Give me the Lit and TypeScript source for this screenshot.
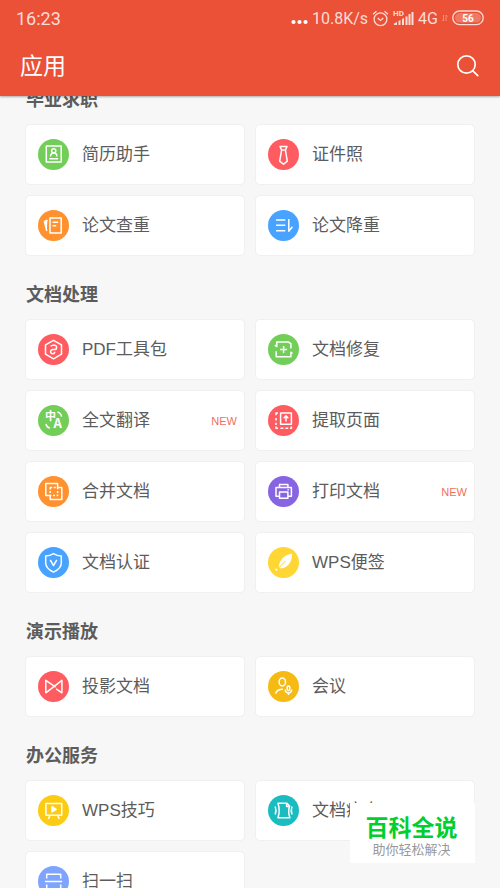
import { LitElement, html, svg, css, nothing, type SVGTemplateResult } from "lit";
import { customElement, property } from "lit/decorators.js";

interface AppItem {
  name: string;
  icon: string;
  color: string;
  isNew?: boolean;
}

interface AppSection {
  title: string;
  items: AppItem[];
}

const GREEN = "#73cd59";
const RED = "#ff5c62";
const ORANGE = "#ff912e";
const BLUE = "#47a3ff";

const sections: AppSection[] = [
  {
    title: "毕业求职",
    items: [
      { name: "简历助手", icon: "resume", color: GREEN },
      { name: "证件照", icon: "tie", color: RED },
      { name: "论文查重", icon: "check", color: ORANGE },
      { name: "论文降重", icon: "reduce", color: BLUE },
    ],
  },
  {
    title: "文档处理",
    items: [
      { name: "PDF工具包", icon: "pdf", color: RED },
      { name: "文档修复", icon: "repair", color: GREEN },
      { name: "全文翻译", icon: "translate", color: GREEN, isNew: true },
      { name: "提取页面", icon: "extract", color: RED },
      { name: "合并文档", icon: "merge", color: ORANGE },
      { name: "打印文档", icon: "print", color: "#8764e2", isNew: true },
      { name: "文档认证", icon: "shield", color: BLUE },
      { name: "WPS便签", icon: "feather", color: "#ffd633" },
    ],
  },
  {
    title: "演示播放",
    items: [
      { name: "投影文档", icon: "project", color: RED },
      { name: "会议", icon: "meeting", color: "#f6ba14" },
    ],
  },
  {
    title: "办公服务",
    items: [
      { name: "WPS技巧", icon: "tips", color: "#fccb14" },
      { name: "文档瘦身", icon: "slim", color: "#1bbcc0" },
      { name: "扫一扫", icon: "scan", color: "#7ea4ff" },
    ],
  },
];

const glyphs: Record<string, SVGTemplateResult> = {
  resume: svg`<path d="M8.3 7h14.9v16H8.3z"/><circle cx="15.7" cy="11.8" r="2.1"/><path d="M12.5 17.6c0-2.3 1.2-3.6 3.2-3.6s3.2 1.3 3.2 3.6M11.3 19.8h8.8"/>`,
  tie: svg`<path d="M12 7.5h7l-1.6 3.6h-3.8zM13.6 11.1l-1.9 11 3.8 3.2 3.8-3.2-1.9-11"/>`,
  check: svg`<path d="M12 8h11.2v15H12zM14.6 12.2h5.6M14.6 15.8h3.6"/><path d="M9.4 10.2l-3 1.2 2.4 9.6z" fill="#fff" stroke="none"/><path d="M9.4 10.2l-3 1.2 2.4 9.6"/>`,
  reduce: svg`<path d="M8 10h9.3M8 15.3h9.3M8 20.7h9.3M20.8 9v12.2l3.6-4.4"/>`,
  pdf: svg`<path d="M15.5 6.3l8 4.6v9.3l-8 4.6-8-4.6v-9.3z"/><path d="M12.6 12.4c.6-.9 1.500-1.200 2.600-1.200h1.200a2.200 2.200 0 0 1 0 4.400h-1.700a2.100 2.100 0 1 0 0 4.200c1.700 0 2-.9 2-2"/>`,
  repair: svg`<path d="M6.8 11.2l2 1.300V8h11.500l2.600 1.600v5M8.200 17.200v5.600h14.700v-4.600l1.600 1.300M15.600 12v7M12.100 15.500h7"/>`,
  translate: svg`<text class="zh" x="7" y="15">中</text><text class="en" x="15.400" y="23.400">A</text><path d="M19.400 7c2.200.5 3.600 2 4.200 4.600M8 18.800c.3 2.300 1.500 3.600 3.800 4.200"/>`,
  extract: svg`<path d="M12.600 8h10.800v11.200H12.600zM18 16.400v-5M15.700 13.200l2.300-2.300 2.300 2.300"/><path d="M10 8H8v2.300M8 13v2.400M8 17.800v2.300M8 21.600v1.600h2M12.400 23.200h3M17.400 23.200h2.800M22 23.200h1.400v-1.600"/>`,
  merge: svg`<path d="M7.800 7.500h11.800v4h4.200v12H12.200v-4H7.800z"/><path stroke-dasharray="2 1.600" d="M12.200 11.500h7.400v8h-7.400z"/>`,
  print: svg`<path d="M11.500 20.200H8v-8.700h15.400v8.700h-3.500M11.500 11.500V8.400h8.400v3.100M11.500 16h8.400v6.200h-8.400zM19.500 13.800h1.300"/>`,
  shield: svg`<path d="M15.500 6.600c2.300 1.600 4.800 2.300 7.800 2.300v7.200c0 4.100-3.300 7-7.800 9-4.500-2-7.800-4.900-7.800-9V8.900c3 0 5.500-.7 7.800-2.300zM12.200 12.800l3.300 5.700 3.300-5.700"/>`,
  feather: svg`<path class="solid" stroke="none" d="M24 6.600c.5 6.500-3 13.400-9.400 14.600-1.200.2-2.400.1-3.600-.3-.8-6 5-13.400 13-14.300z"/><path class="vein" d="M10 21.800l7.600-8"/><path d="M7.700 23.200l1.200-1.100" stroke-width="2.400"/>`,
  project: svg`<path d="M17.700 16.200L7.800 9.400v12.400L23.900 9.400v12.400l-5.700-3.900"/>`,
  meeting: svg`<ellipse cx="14.300" cy="11" rx="3.200" ry="4"/><path d="M7.700 22.600c.7-3 3.200-4.200 7.200-4.300M17.200 18.600c0 4.400 6.500 4.400 6.500 0M20.500 22v2"/><rect x="19.200" y="14.900" width="2.600" height="4.700" rx="1.300"/>`,
  tips: svg`<path d="M7.900 8.400h15.800v11.800H7.900zM11.800 20.800l-1.500 3M19.800 20.800l1.500 3"/><path d="M14 11.700v5.200l4.200-2.600z" fill="#fff"/>`,
  slim: svg`<path d="M10 8.200h9l2.600 2.800c-1.200 3.800-1.200 7.800.3 11.800H10c1.600-5 1.600-9.700 0-14.600zM18.600 8.400v3h2.800M7.200 11.500c1 2.600 1 5.400 0 8M24 11.500c-1 2.600-1 5.400 0 8"/>`,
  scan: svg`<path d="M8.700 12.600V8.200h14v4.400M8.700 18.600V23h14v-4.400M6.900 15.600h17.300"/>`,
};

@customElement("app-glyph")
export class AppGlyph extends LitElement {
  @property() name = "";
  @property() color = "";

  static styles = css`
    :host { display: block; flex: none; width: 31px; height: 31px; }
    .art { display: block; fill: none; stroke: #fff; stroke-width: 1.5; stroke-linejoin: round; }
    .disc { stroke: none; }
    .solid { fill: #fff; }
    .vein { stroke: #ffd633; stroke-width: 1; }
    .zh, .en { fill: #fff; stroke: none; font: 700 11px "Noto Sans CJK SC", sans-serif; }
    .en { font-size: 13px; }
  `;

  render() {
    return html`<svg class="art" width="31" height="31" viewBox="0 0 31 31" aria-hidden="true">
      <circle class="disc" cx="15.5" cy="15.5" r="15.5" fill=${this.color} />
      ${glyphs[this.name]}
    </svg>`;
  }
}

@customElement("app-root")
export class AppRoot extends LitElement {
  static styles = css`
    :host {
      display: flex;
      flex-direction: column;
      height: 100vh;
      overflow: hidden;
      background: #f7f7f7;
      color: #5c5c5c;
      font-family: "Liberation Sans", "Noto Sans CJK SC", sans-serif;
    }
    .header {
      flex: none;
      z-index: 1;
      background: #ea5136;
      color: #fff;
      box-shadow: 0 1px 2px rgba(0, 0, 0, 0.3);
    }
    .status {
      display: flex;
      align-items: center;
      justify-content: space-between;
      height: 36px;
      padding: 0 16px;
      color: #fbdcd6;
      font-family: Roboto, sans-serif;
      font-size: 18px;
    }
    .signals { display: flex; align-items: center; gap: 4px; font-size: 16px; }
    .signals svg { display: block; flex: none; }
    .hd { font: 700 8px Roboto, sans-serif; fill: #fbdcd6; }
    .level { font: 700 10px Roboto, sans-serif; fill: #fff; }
    .toolbar {
      display: flex;
      align-items: center;
      justify-content: space-between;
      height: 60px;
      padding: 0 20px;
    }
    .title { margin: 0; font-size: 23px; font-weight: 400; line-height: 32px; }
    button { font: inherit; color: inherit; border: 0; background: none; cursor: pointer; }
    .search { display: block; padding: 0; }
    .search svg { display: block; }
    .list { flex: 1; min-height: 0; overflow-y: auto; scrollbar-width: none; padding: 0 25px; }
    .section { margin-bottom: 27px; }
    .section:first-child { margin-top: -8px; }
    .heading { margin: 0 1px 12px; font-size: 18px; font-weight: 700; line-height: 24px; }
    .grid { display: grid; grid-template-columns: 1fr 1fr; gap: 10px; }
    .card {
      display: flex;
      align-items: center;
      gap: 13px;
      height: 61px;
      padding: 0 7px 0 12px;
      border: 1px solid #f0f0f0;
      border-radius: 5px;
      background: #fff;
      text-align: left;
    }
    .name { flex: 1; font-size: 17px; line-height: 24px; white-space: nowrap; }
    .new { color: #f0705a; font-size: 11px; }
    .badge {
      position: fixed;
      z-index: 2;
      right: 25px;
      bottom: 25px;
      box-sizing: border-box;
      width: 125px;
      padding: 11px 2px 5px 0;
      background: #fff;
      text-align: center;
    }
    .brand { margin: 0; color: #00cf2e; font-size: 23px; font-weight: 700; line-height: 28px; }
    .motto { margin: 0; color: #999; font-size: 13px; line-height: 16px; }
  `;

  private renderStatus() {
    return html`<div class="status">
      <span>16:23</span>
      <div class="signals">
        <svg width="17" height="16" viewBox="0 0 17 16" fill="#fff" aria-hidden="true">
          <circle cx="2.500" cy="12" r="2.100" /><circle cx="8.500" cy="12" r="2.100" /><circle cx="14.500" cy="12" r="2.100" />
        </svg>
        <span>10.8K/s</span>
        <svg width="17" height="17" viewBox="0 0 17 17" fill="none" stroke="#fbdcd6" stroke-width="1.300" aria-hidden="true">
          <circle cx="8.500" cy="9.200" r="6.400" /><path d="M1 4.200L4.500 1.300M16 4.200l-3.500-2.900M5.700 8l2.800 2.500L11.300 8" />
        </svg>
        <svg width="21" height="18" viewBox="0 0 21 18" aria-hidden="true">
          <text class="hd" x="0" y="7">HD</text>
          <path fill="#fbdcd6" d="M1 16v-1.500L4 13v3zM5.500 16v-4l2-1v5zM9 16v-6l2-1v7zM12.500 16V7.500h2V16zM15.500 16V5h2v11zM18.500 16V3h2v13z" />
        </svg>
        <span>4G</span>
        <svg width="6" height="8" viewBox="0 0 6 8" fill="none" stroke="#f3a293" stroke-width="0.800" aria-hidden="true">
          <path d="M1.500 1v6L0 5.500M4 7V1l1.500 1.500" />
        </svg>
        <svg width="32" height="16" viewBox="0 0 32 16" role="img" aria-label="电量 56%">
          <rect x="0.800" y="1" width="30.400" height="13.600" rx="6.800" fill="none" stroke="#fbdcd6" stroke-width="1.300" />
          <rect x="3" y="3" width="26" height="9.600" rx="4.800" fill="#ee7a64" />
          <text class="level" x="16" y="11.500" text-anchor="middle">56</text>
        </svg>
      </div>
    </div>`;
  }

  private renderCard(item: AppItem) {
    return html`<button class="card" type="button">
      <app-glyph name=${item.icon} color=${item.color}></app-glyph>
      <span class="name">${item.name}</span>
      ${item.isNew ? html`<span class="new">NEW</span>` : nothing}
    </button>`;
  }

  render() {
    return html`
      <header class="header">
        ${this.renderStatus()}
        <div class="toolbar">
          <h1 class="title">应用</h1>
          <button class="search" type="button" aria-label="搜索">
            <svg width="24" height="24" viewBox="0 0 24 24" fill="none" stroke="#fff" stroke-width="1.700" stroke-linecap="round">
              <circle cx="10.500" cy="10.500" r="8.700" /><path d="M16.800 16.800l5 4.800" />
            </svg>
          </button>
        </div>
      </header>
      <main class="list">
        ${sections.map(
          (section) => html`<section class="section">
            <h2 class="heading">${section.title}</h2>
            <div class="grid">${section.items.map((item) => this.renderCard(item))}</div>
          </section>`
        )}
      </main>
      <aside class="badge">
        <p class="brand">百科全说</p>
        <p class="motto">助你轻松解决</p>
      </aside>
    `;
  }
}
